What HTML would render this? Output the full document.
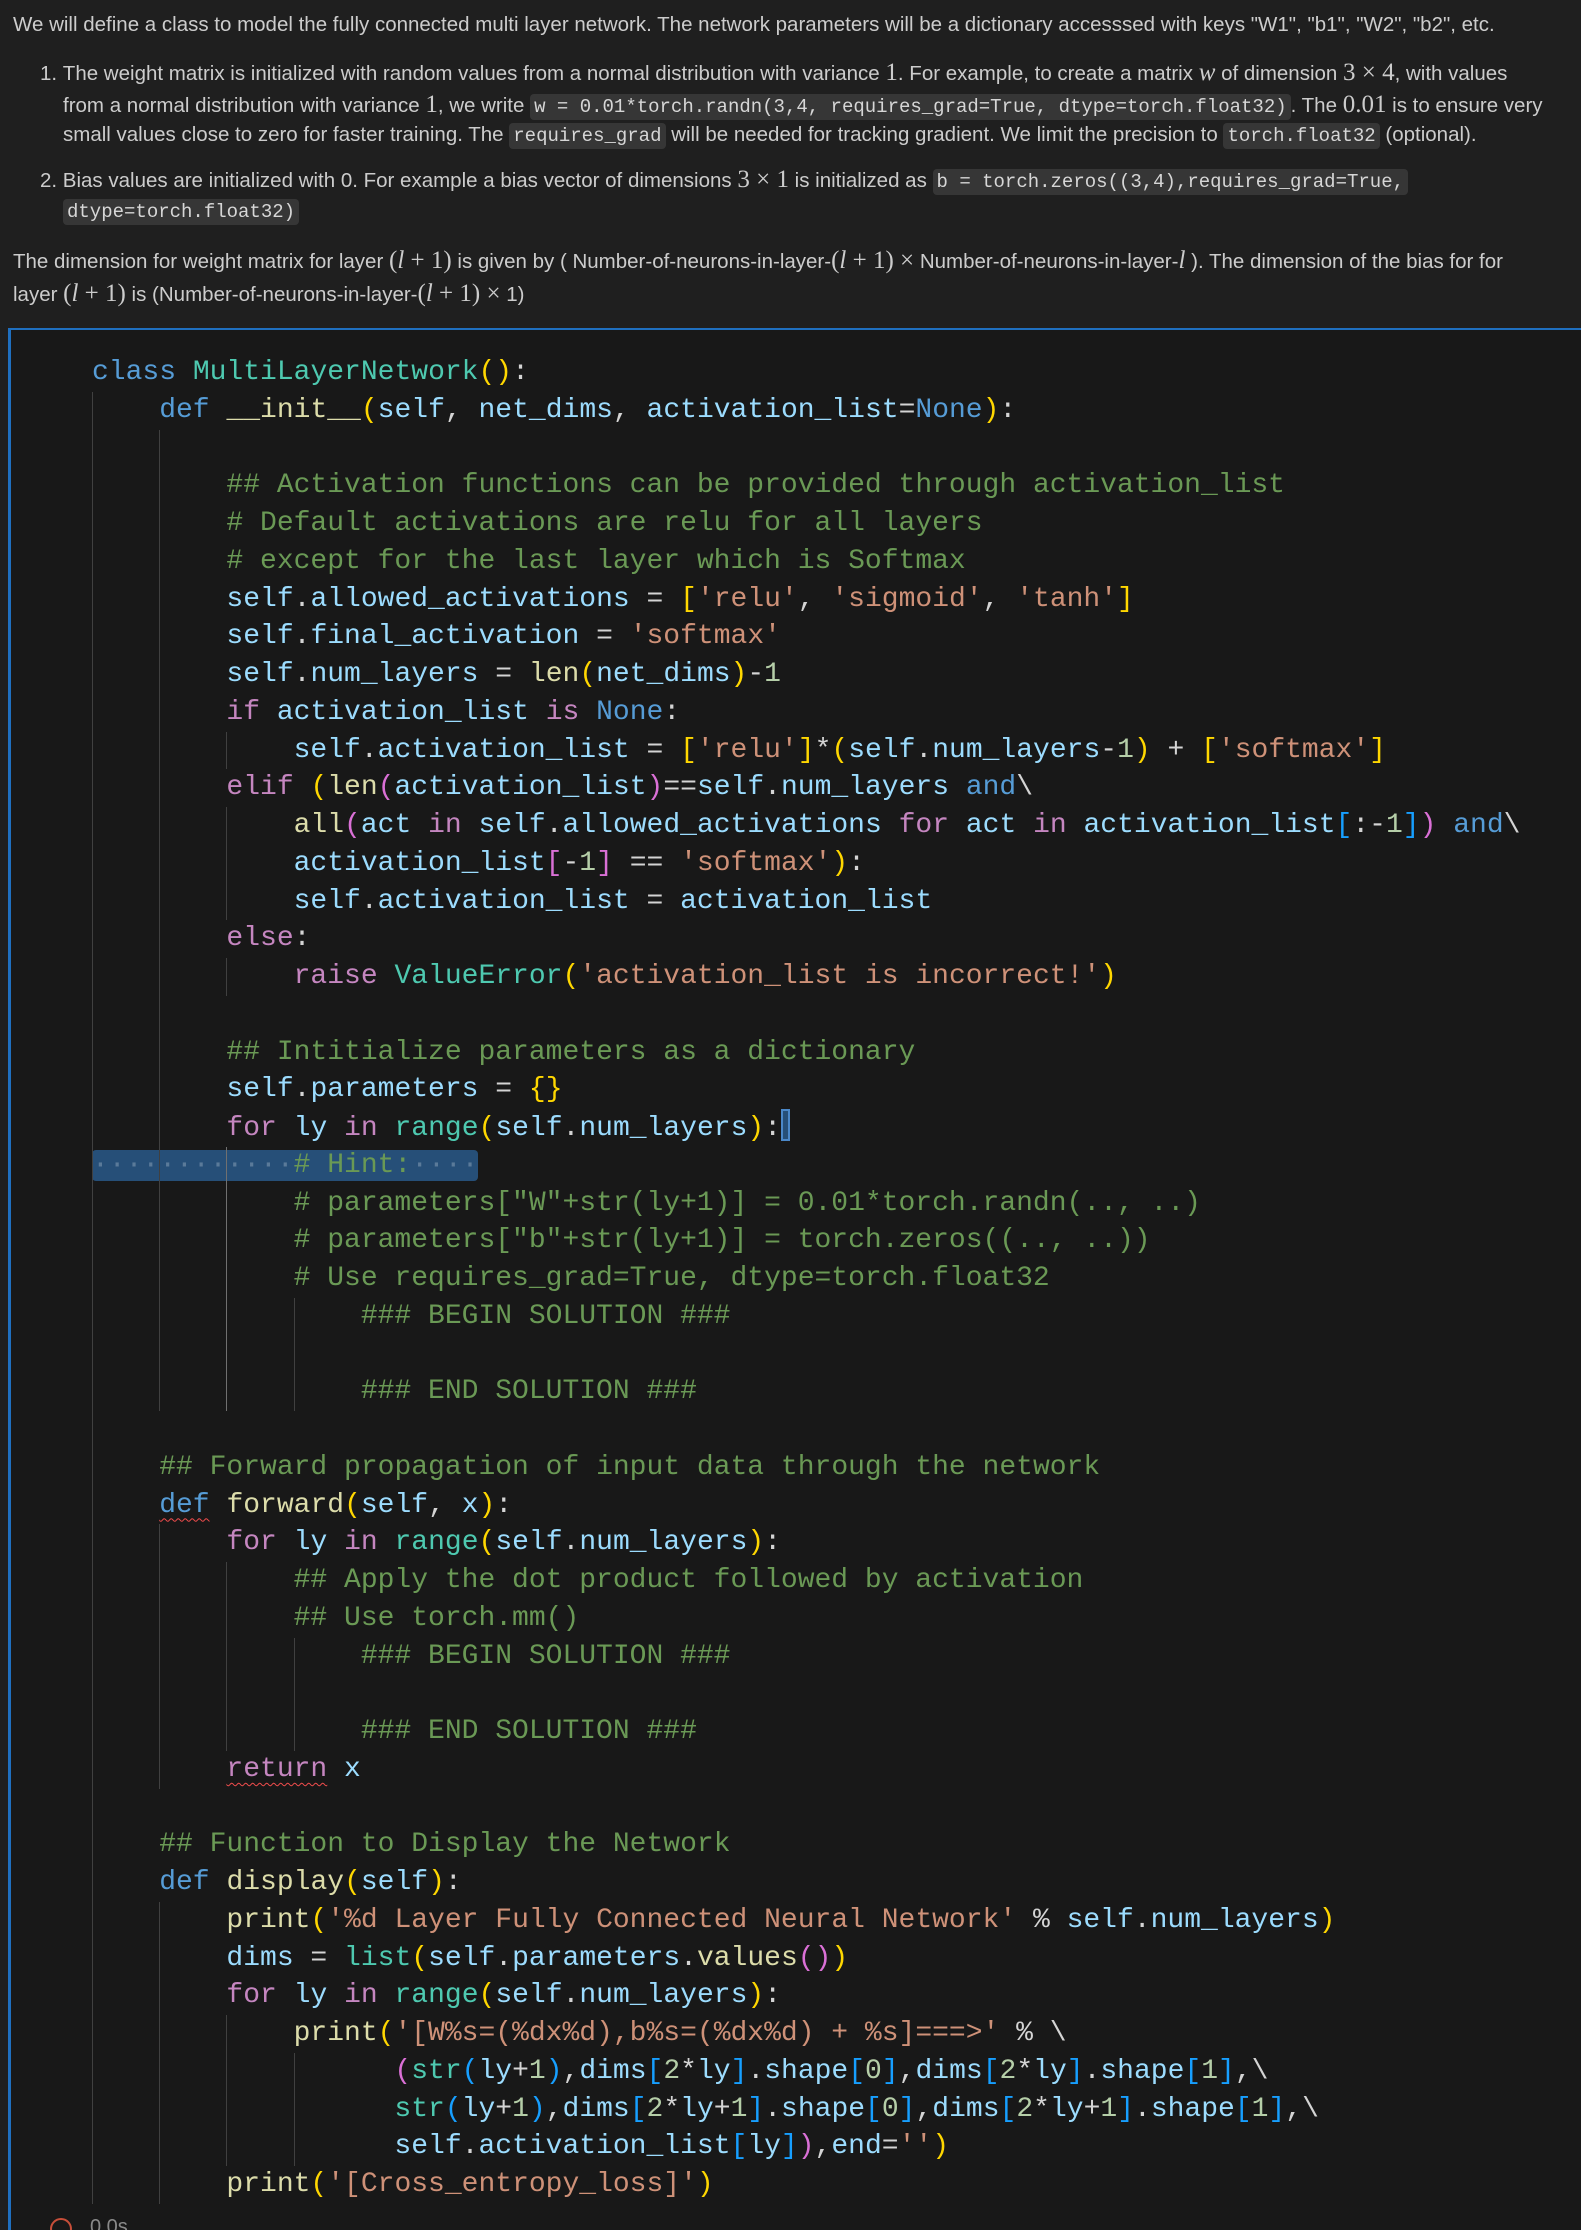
<!DOCTYPE html>
<html><head><meta charset="utf-8">
<style>
html,body{margin:0;padding:0;background:#1f1f1f;width:1581px;height:2230px;overflow:hidden;position:relative;}
.md{position:absolute;left:0;top:0;width:1581px;color:#cccccc;font-family:"Liberation Sans",sans-serif;font-size:20.5px;}
.ln{position:absolute;white-space:nowrap;line-height:30px;height:30px;}
.m{font-family:"Liberation Serif",serif;font-size:25px;}
.mi{font-family:"Liberation Serif",serif;font-size:25px;font-style:italic;}
code{font-family:"Liberation Mono",monospace;font-size:19px;background:#363636;border-radius:4px;padding:2px 4px;color:#d6d6d6;}
.cell{position:absolute;left:8px;top:328px;width:1573px;height:1902px;background:#181818;border-top:2px solid #1f6fbf;border-left:3px solid #1f6fbf;box-sizing:border-box;}
.code{position:absolute;left:92px;top:354px;margin:0;font-family:"Liberation Mono",monospace;font-size:28px;line-height:37.75px;color:#d4d4d4;}
.l{height:37.75px;white-space:pre;position:relative;}
i{display:inline-block;width:4ch;height:37.75px;vertical-align:top;box-shadow:inset 1px 0 0 #404040;font-style:normal;}
i.a{box-shadow:inset 1px 0 0 #707070;}
.k{color:#569cd6}.c{color:#c586c0}.t{color:#4ec9b0}.v{color:#9cdcfe}.s{color:#ce9178}.g{color:#6a9955}.n{color:#b5cea8}.f{color:#dcdcaa}
.y{color:#ffd700}.p{color:#da70d6}.b{color:#179fff}
.sq{text-decoration:underline wavy #f14c4c;text-underline-offset:6px;text-decoration-thickness:1px;}
.sel{background:#264f78;border-radius:4px;}
.dot{color:#5a7a99}
.sel i{color:#5a7a99}
.cur{display:inline-block;width:9px;height:32px;border:2px solid #4b88c9;background:#264f78;vertical-align:-6px;box-sizing:border-box;}
.li{font-family:"Liberation Serif",serif;font-style:italic;}
</style></head><body>
<div class="md">
<div class="ln" style="left:13px;top:10px">We will define a class to model the fully connected multi layer network. The network parameters will be a dictionary accesssed with keys "W1", "b1", "W2", "b2", etc.</div>
<div class="ln" style="left:40px;top:58px">1.&nbsp;The weight matrix is initialized with random values from a normal distribution with variance <span class="m">1</span>. For example, to create a matrix <span class="mi">w</span> of dimension <span class="m">3 × 4</span>, with values</div>
<div class="ln" style="left:63px;top:90px">from a normal distribution with variance <span class="m">1</span>, we write <code>w = 0.01*torch.randn(3,4, requires_grad=True, dtype=torch.float32)</code>. The <span class="m">0.01</span> is to ensure very</div>
<div class="ln" style="left:63px;top:120px">small values close to zero for faster training. The <code>requires_grad</code> will be needed for tracking gradient. We limit the precision to <code>torch.float32</code> (optional).</div>
<div class="ln" style="left:40px;top:165px">2.&nbsp;Bias values are initialized with 0. For example a bias vector of dimensions <span class="m">3 × 1</span> is initialized as <code>b = torch.zeros((3,4),requires_grad=True,</code></div>
<div class="ln" style="left:63px;top:196px"><code>dtype=torch.float32)</code></div>
<div class="ln" style="left:13px;top:246px">The dimension for weight matrix for layer <span class="m">(<span class="li">l</span> + 1)</span> is given by ( Number-of-neurons-in-layer-<span class="m">(<span class="li">l</span> + 1) ×</span> Number-of-neurons-in-layer-<span class="mi">l</span> ). The dimension of the bias for for</div>
<div class="ln" style="left:13px;top:279px">layer <span class="m">(<span class="li">l</span> + 1)</span> is (Number-of-neurons-in-layer-<span class="m">(<span class="li">l</span> + 1) ×</span> 1)</div>
</div>
<div class="cell"></div>
<div class="code"><div class="l"><span class="k">class</span> <span class="t">MultiLayerNetwork</span><span class="y">()</span>:</div><div class="l"><i></i><span class="k">def</span> <span class="f">__init__</span><span class="y">(</span><span class="v">self</span>, <span class="v">net_dims</span>, <span class="v">activation_list</span>=<span class="k">None</span><span class="y">)</span>:</div><div class="l"><i></i><i></i></div><div class="l"><i></i><i></i><span class="g">## Activation functions can be provided through activation_list</span></div><div class="l"><i></i><i></i><span class="g"># Default activations are relu for all layers</span></div><div class="l"><i></i><i></i><span class="g"># except for the last layer which is Softmax</span></div><div class="l"><i></i><i></i><span class="v">self</span>.<span class="v">allowed_activations</span> = <span class="y">[</span><span class="s">'relu'</span>, <span class="s">'sigmoid'</span>, <span class="s">'tanh'</span><span class="y">]</span></div><div class="l"><i></i><i></i><span class="v">self</span>.<span class="v">final_activation</span> = <span class="s">'softmax'</span></div><div class="l"><i></i><i></i><span class="v">self</span>.<span class="v">num_layers</span> = <span class="f">len</span><span class="y">(</span><span class="v">net_dims</span><span class="y">)</span>-<span class="n">1</span></div><div class="l"><i></i><i></i><span class="c">if</span> <span class="v">activation_list</span> <span class="c">is</span> <span class="k">None</span>:</div><div class="l"><i></i><i></i><i></i><span class="v">self</span>.<span class="v">activation_list</span> = <span class="y">[</span><span class="s">'relu'</span><span class="y">]</span>*<span class="y">(</span><span class="v">self</span>.<span class="v">num_layers</span>-<span class="n">1</span><span class="y">)</span> + <span class="y">[</span><span class="s">'softmax'</span><span class="y">]</span></div><div class="l"><i></i><i></i><span class="c">elif</span> <span class="y">(</span><span class="f">len</span><span class="p">(</span><span class="v">activation_list</span><span class="p">)</span>==<span class="v">self</span>.<span class="v">num_layers</span> <span class="k">and</span>\</div><div class="l"><i></i><i></i><i></i><span class="f">all</span><span class="p">(</span><span class="v">act</span> <span class="c">in</span> <span class="v">self</span>.<span class="v">allowed_activations</span> <span class="c">for</span> <span class="v">act</span> <span class="c">in</span> <span class="v">activation_list</span><span class="b">[</span>:-<span class="n">1</span><span class="b">]</span><span class="p">)</span> <span class="k">and</span>\</div><div class="l"><i></i><i></i><i></i><span class="v">activation_list</span><span class="p">[</span>-<span class="n">1</span><span class="p">]</span> == <span class="s">'softmax'</span><span class="y">)</span>:</div><div class="l"><i></i><i></i><i></i><span class="v">self</span>.<span class="v">activation_list</span> = <span class="v">activation_list</span></div><div class="l"><i></i><i></i><span class="c">else</span>:</div><div class="l"><i></i><i></i><i></i><span class="c">raise</span> <span class="t">ValueError</span><span class="y">(</span><span class="s">'activation_list is incorrect!'</span><span class="y">)</span></div><div class="l"><i></i><i></i></div><div class="l"><i></i><i></i><span class="g">## Intitialize parameters as a dictionary</span></div><div class="l"><i></i><i></i><span class="v">self</span>.<span class="v">parameters</span> = <span class="y">{}</span></div><div class="l"><i></i><i></i><span class="c">for</span> <span class="v">ly</span> <span class="c">in</span> <span class="t">range</span><span class="y">(</span><span class="v">self</span>.<span class="v">num_layers</span><span class="y">)</span>:<span class="cur"></span></div><div class="l"><span class="sel"><i>····</i><i>····</i><i class="a">····</i><span class="g"># Hint:</span><span class="dot">····</span></span></div><div class="l"><i></i><i></i><i class="a"></i><span class="g"># parameters["W"+str(ly+1)] = 0.01*torch.randn(.., ..)</span></div><div class="l"><i></i><i></i><i class="a"></i><span class="g"># parameters["b"+str(ly+1)] = torch.zeros((.., ..))</span></div><div class="l"><i></i><i></i><i class="a"></i><span class="g"># Use requires_grad=True, dtype=torch.float32</span></div><div class="l"><i></i><i></i><i class="a"></i><i></i><span class="g">### BEGIN SOLUTION ###</span></div><div class="l"><i></i><i></i><i class="a"></i><i></i></div><div class="l"><i></i><i></i><i class="a"></i><i></i><span class="g">### END SOLUTION ###</span></div><div class="l"><i></i></div><div class="l"><i></i><span class="g">## Forward propagation of input data through the network</span></div><div class="l"><i></i><span class="k sq">def</span> <span class="f">forward</span><span class="y">(</span><span class="v">self</span>, <span class="v">x</span><span class="y">)</span>:</div><div class="l"><i></i><i></i><span class="c">for</span> <span class="v">ly</span> <span class="c">in</span> <span class="t">range</span><span class="y">(</span><span class="v">self</span>.<span class="v">num_layers</span><span class="y">)</span>:</div><div class="l"><i></i><i></i><i></i><span class="g">## Apply the dot product followed by activation</span></div><div class="l"><i></i><i></i><i></i><span class="g">## Use torch.mm()</span></div><div class="l"><i></i><i></i><i></i><i></i><span class="g">### BEGIN SOLUTION ###</span></div><div class="l"><i></i><i></i><i></i><i></i></div><div class="l"><i></i><i></i><i></i><i></i><span class="g">### END SOLUTION ###</span></div><div class="l"><i></i><i></i><span class="c sq">return</span> <span class="v">x</span></div><div class="l"><i></i></div><div class="l"><i></i><span class="g">## Function to Display the Network</span></div><div class="l"><i></i><span class="k">def</span> <span class="f">display</span><span class="y">(</span><span class="v">self</span><span class="y">)</span>:</div><div class="l"><i></i><i></i><span class="f">print</span><span class="y">(</span><span class="s">'%d Layer Fully Connected Neural Network'</span> % <span class="v">self</span>.<span class="v">num_layers</span><span class="y">)</span></div><div class="l"><i></i><i></i><span class="v">dims</span> = <span class="t">list</span><span class="y">(</span><span class="v">self</span>.<span class="v">parameters</span>.<span class="f">values</span><span class="p">()</span><span class="y">)</span></div><div class="l"><i></i><i></i><span class="c">for</span> <span class="v">ly</span> <span class="c">in</span> <span class="t">range</span><span class="y">(</span><span class="v">self</span>.<span class="v">num_layers</span><span class="y">)</span>:</div><div class="l"><i></i><i></i><i></i><span class="f">print</span><span class="y">(</span><span class="s">'[W%s=(%dx%d),b%s=(%dx%d) + %s]===&gt;'</span> % \</div><div class="l"><i></i><i></i><i></i><i></i>  <span class="p">(</span><span class="t">str</span><span class="b">(</span><span class="v">ly</span>+<span class="n">1</span><span class="b">)</span>,<span class="v">dims</span><span class="b">[</span><span class="n">2</span>*<span class="v">ly</span><span class="b">]</span>.<span class="v">shape</span><span class="b">[</span><span class="n">0</span><span class="b">]</span>,<span class="v">dims</span><span class="b">[</span><span class="n">2</span>*<span class="v">ly</span><span class="b">]</span>.<span class="v">shape</span><span class="b">[</span><span class="n">1</span><span class="b">]</span>,\</div><div class="l"><i></i><i></i><i></i><i></i>  <span class="t">str</span><span class="b">(</span><span class="v">ly</span>+<span class="n">1</span><span class="b">)</span>,<span class="v">dims</span><span class="b">[</span><span class="n">2</span>*<span class="v">ly</span>+<span class="n">1</span><span class="b">]</span>.<span class="v">shape</span><span class="b">[</span><span class="n">0</span><span class="b">]</span>,<span class="v">dims</span><span class="b">[</span><span class="n">2</span>*<span class="v">ly</span>+<span class="n">1</span><span class="b">]</span>.<span class="v">shape</span><span class="b">[</span><span class="n">1</span><span class="b">]</span>,\</div><div class="l"><i></i><i></i><i></i><i></i>  <span class="v">self</span>.<span class="v">activation_list</span><span class="b">[</span><span class="v">ly</span><span class="b">]</span><span class="p">)</span>,<span class="v">end</span>=<span class="s">''</span><span class="y">)</span></div><div class="l"><i></i><i></i><span class="f">print</span><span class="y">(</span><span class="s">'[Cross_entropy_loss]'</span><span class="y">)</span></div></div>
<div style="position:absolute;left:50px;top:2218px;width:22px;height:22px;border:2px solid #c74e39;border-radius:50%;box-sizing:border-box"></div>
<div style="position:absolute;left:90px;top:2216px;color:#8a8a8a;font-family:'Liberation Sans',sans-serif;font-size:20px">0.0s</div>
</body></html>
